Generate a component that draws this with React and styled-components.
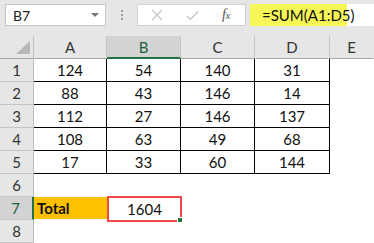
import React from "react";
import styled, { createGlobalStyle } from "styled-components";

const Global = createGlobalStyle`
  html, body { margin: 0; padding: 0; background: #ffffff; }
  body { font-family: "Lato", "Noto Sans", "Liberation Sans", sans-serif; }
`;

const Page = styled.div`
  width: 374px;
  height: 243px;
  overflow: hidden;
  background: #e6e6e6;
  display: flex;
  flex-direction: column;
`;

const Toolbar = styled.div`
  height: 25px;
  margin-top: 4px;
  display: flex;
  align-items: stretch;
`;

const NameBox = styled.div`
  margin-left: 5px;
  width: 101px;
  box-sizing: border-box;
  background: #fff;
  border: 1px solid #c6c6c6;
  display: flex;
  align-items: center;
  justify-content: space-between;
  padding: 0 6px 0 7px;
  font-size: 14px;
  color: #222;
`;

const Caret = styled.span`
  width: 0;
  height: 0;
  border-left: 4px solid transparent;
  border-right: 4px solid transparent;
  border-top: 4px solid #777;
`;

const Grip = styled.div`
  width: 31px;
  display: flex;
  flex-direction: column;
  align-items: center;
  justify-content: center;
  gap: 2px;
  & > span {
    width: 2px;
    height: 2px;
    background: #9a9a9a;
  }
`;

const ActionBox = styled.div`
  width: 109px;
  box-sizing: border-box;
  background: #fff;
  border: 1px solid #d0d0d0;
  display: flex;
  align-items: center;
`;

const ActionIcon = styled.span`
  width: ${(p) => p.$w}px;
  display: flex;
  justify-content: center;
  align-items: center;
`;

const Fx = styled.span`
  font-family: "Liberation Serif", "DejaVu Serif", serif;
  font-style: italic;
  font-size: 14px;
  color: #555;
  letter-spacing: -0.5px;
  & > sub {
    font-size: 11px;
    vertical-align: baseline;
  }
`;

const FormulaBox = styled.div`
  margin-left: 4px;
  flex: 1;
  background: #fff;
  display: flex;
  align-items: stretch;
`;

const Highlight = styled.div`
  width: 97px;
  background: #f6f656;
  display: flex;
  align-items: center;
  padding-left: 12px;
  box-sizing: border-box;
  font-family: "Lato", "Noto Sans", sans-serif;
  font-size: 15px;
  color: #111;
`;

const Sheet = styled.div`
  margin-top: 10px;
  flex: 1;
  display: grid;
  grid-template-columns: 34px 73px 74px 74px 75px 1fr;
  grid-template-rows: 23px repeat(8, 23px);
  background: #fff;
`;

const Corner = styled.div`
  background: #e6e6e6;
  border-right: 1px solid #bdbdbd;
  border-bottom: 1px solid #a8a8a8;
  box-sizing: border-box;
  position: relative;
  &::after {
    content: "";
    position: absolute;
    right: 3px;
    bottom: 4px;
    width: 0;
    height: 0;
    border-left: 14px solid transparent;
    border-bottom: 13px solid #b8b8b8;
  }
`;

const ColHead = styled.div`
  box-sizing: border-box;
  background: ${(p) => (p.$sel ? "#d3d3d3" : "#e6e6e6")};
  border-right: 1px solid ${(p) => (p.$last ? "transparent" : "#c4c4c4")};
  border-bottom: ${(p) => (p.$sel ? "2px solid #217346" : "1px solid #a8a8a8")};
  display: flex;
  align-items: center;
  justify-content: center;
  font-size: 15px;
  color: ${(p) => (p.$sel ? "#1e5e3a" : "#333")};
  padding-top: ${(p) => (p.$sel ? "1px" : "0")};
`;

const RowHead = styled.div`
  box-sizing: border-box;
  background: ${(p) => (p.$sel ? "#d3d3d3" : "#e6e6e6")};
  border-right: ${(p) => (p.$sel ? "2px solid #217346" : "1px solid #bdbdbd")};
  border-bottom: 1px solid #c4c4c4;
  display: flex;
  align-items: center;
  justify-content: center;
  font-size: 15px;
  color: ${(p) => (p.$sel ? "#1e5e3a" : "#333")};
  padding-right: ${(p) => (p.$sel ? "1px" : "0")};
`;

const Cell = styled.div`
  box-sizing: border-box;
  border-right: ${(p) => (p.$box ? "1px solid #000" : "none")};
  border-bottom: ${(p) => (p.$box ? "1px solid #000" : "none")};
  display: flex;
  align-items: center;
  justify-content: center;
  font-size: 15px;
  color: #111;
`;

const TotalLabel = styled.div`
  box-sizing: border-box;
  background: #ffc000;
  display: flex;
  align-items: center;
  padding-left: 3px;
  font-weight: 700;
  font-size: 15px;
  color: #111;
  margin-bottom: 1px;
`;

const TotalValue = styled.div`
  box-sizing: border-box;
  border: 2px solid #f34848;
  margin: -1px -1px -2px 0;
  display: flex;
  align-items: center;
  justify-content: center;
  font-size: 15px;
  color: #111;
  position: relative;
  &::after {
    content: "";
    position: absolute;
    right: -3px;
    bottom: -3px;
    width: 4px;
    height: 4px;
    background: #217346;
    border: 1px solid #fff;
  }
`;

const data = [
  [124, 54, 140, 31],
  [88, 43, 146, 14],
  [112, 27, 146, 137],
  [108, 63, 49, 68],
  [17, 33, 60, 144],
];

const cols = ["A", "B", "C", "D", "E"];

export default function App() {
  return (
    <>
      <Global />
      <Page>
        <Toolbar>
          <NameBox>
            <span>B7</span>
            <Caret />
          </NameBox>
          <Grip>
            <span />
            <span />
            <span />
          </Grip>
          <ActionBox>
            <ActionIcon $w={38}>
              <svg width="12" height="12" viewBox="0 0 12 12">
                <path d="M1 1 L11 11 M11 1 L1 11" stroke="#c8c8c8" strokeWidth="1.4" fill="none" />
              </svg>
            </ActionIcon>
            <ActionIcon $w={32}>
              <svg width="13" height="11" viewBox="0 0 13 11">
                <path d="M1 6 L4.5 9.5 L12 1.5" stroke="#c8c8c8" strokeWidth="1.4" fill="none" />
              </svg>
            </ActionIcon>
            <ActionIcon $w={36}>
              <Fx>
                f<sub>x</sub>
              </Fx>
            </ActionIcon>
          </ActionBox>
          <FormulaBox>
            <Highlight>=SUM(A1:D5)</Highlight>
          </FormulaBox>
        </Toolbar>
        <Sheet>
          <Corner />
          {cols.map((c, i) => (
            <ColHead key={c} $sel={c === "B"} $last={i === cols.length - 1}>
              {c}
            </ColHead>
          ))}
          {data.map((row, r) => (
            <React.Fragment key={r}>
              <RowHead>{r + 1}</RowHead>
              {row.map((v, ci) => (
                <Cell key={ci} $box>
                  {v}
                </Cell>
              ))}
              <Cell />
            </React.Fragment>
          ))}
          <RowHead>6</RowHead>
          <Cell />
          <Cell />
          <Cell />
          <Cell />
          <Cell />
          <RowHead $sel>7</RowHead>
          <TotalLabel>Total</TotalLabel>
          <TotalValue>1604</TotalValue>
          <Cell />
          <Cell />
          <Cell />
          <RowHead>8</RowHead>
          <Cell />
          <Cell />
          <Cell />
          <Cell />
          <Cell />
        </Sheet>
      </Page>
    </>
  );
}
